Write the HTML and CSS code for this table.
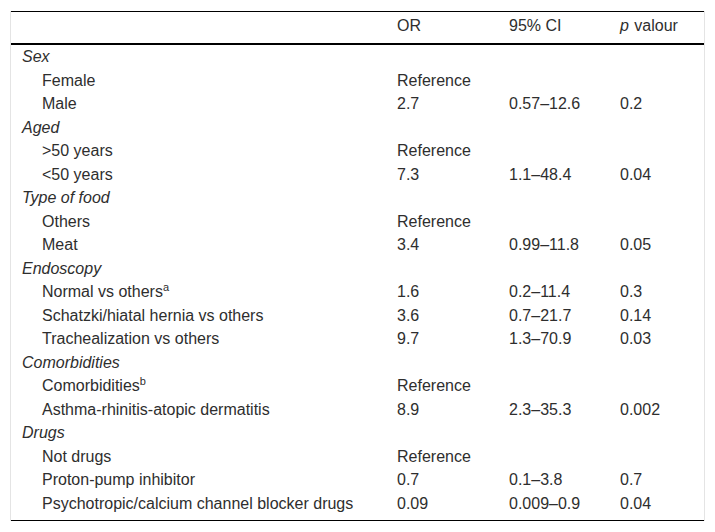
FILE: index.html
```html
<!DOCTYPE html>
<html>
<head>
<meta charset="utf-8">
<link rel="stylesheet" href="styles.css">
</head>
<body>
<div class="frame">
<table class="tbl">
<colgroup><col class="c1"><col class="c2"><col class="c3"><col class="c4"></colgroup>
<thead>
<tr><th></th><th>OR</th><th>95% CI</th><th><i class="pv">p</i> valour</th></tr>
</thead>
<tbody>
<tr><td class="grp" colspan="4">Sex</td></tr>
<tr><td class="sub">Female</td><td>Reference</td><td></td><td></td></tr>
<tr><td class="sub">Male</td><td>2.7</td><td>0.57–12.6</td><td>0.2</td></tr>
<tr><td class="grp" colspan="4">Aged</td></tr>
<tr><td class="sub">&gt;50 years</td><td>Reference</td><td></td><td></td></tr>
<tr><td class="sub">&lt;50 years</td><td>7.3</td><td>1.1–48.4</td><td>0.04</td></tr>
<tr><td class="grp" colspan="4">Type of food</td></tr>
<tr><td class="sub">Others</td><td>Reference</td><td></td><td></td></tr>
<tr><td class="sub">Meat</td><td>3.4</td><td>0.99–11.8</td><td>0.05</td></tr>
<tr><td class="grp" colspan="4">Endoscopy</td></tr>
<tr><td class="sub">Normal vs others<sup>a</sup></td><td>1.6</td><td>0.2–11.4</td><td>0.3</td></tr>
<tr><td class="sub">Schatzki/hiatal hernia vs others</td><td>3.6</td><td>0.7–21.7</td><td>0.14</td></tr>
<tr><td class="sub">Trachealization vs others</td><td>9.7</td><td>1.3–70.9</td><td>0.03</td></tr>
<tr><td class="grp" colspan="4">Comorbidities</td></tr>
<tr><td class="sub">Comorbidities<sup>b</sup></td><td>Reference</td><td></td><td></td></tr>
<tr><td class="sub">Asthma-rhinitis-atopic dermatitis</td><td>8.9</td><td>2.3–35.3</td><td>0.002</td></tr>
<tr><td class="grp" colspan="4">Drugs</td></tr>
<tr><td class="sub">Not drugs</td><td>Reference</td><td></td><td></td></tr>
<tr><td class="sub">Proton-pump inhibitor</td><td>0.7</td><td>0.1–3.8</td><td>0.7</td></tr>
<tr class="last"><td class="sub">Psychotropic/calcium channel blocker drugs</td><td>0.09</td><td>0.009–0.9</td><td>0.04</td></tr>
</tbody>
</table>
</div>
</body>
</html>
```
FILE: styles.css
```css
html, body {
  margin: 0;
  padding: 0;
  background: #ffffff;
}
body {
  font-family: "Liberation Sans", Arial, sans-serif;
  font-size: 16px;
  color: #2e2e2e;
}
.frame {
  margin: 11px 0 0 10px;
  width: 693px;
  border-left: 1px solid #e4e4e4;
  border-right: 1px solid #e4e4e4;
}
.tbl {
  width: 693px;
  border-collapse: collapse;
  table-layout: fixed;
}
.c1 { width: 375px; }
.c2 { width: 112px; }
.c3 { width: 111px; }
.c4 { width: 95px; }
.tbl thead th {
  font-weight: normal;
  text-align: left;
  line-height: 18px;
  padding: 5px 11px 8px 11px;
  border-top: 1px solid #000;
  border-bottom: 2px solid #000;
  white-space: nowrap;
}
.pv {
  margin-right: 1px;
}
.tbl td {
  line-height: 18px;
  padding: 3.4px 11px 2.1px 11px;
  vertical-align: top;
  white-space: nowrap;
}
.tbl td.grp {
  font-style: italic;
}
.tbl td.sub {
  padding-left: 31px;
}
.tbl tr.last td {
  padding-bottom: 7px;
  border-bottom: 1px solid #000;
}
sup {
  font-size: 11px;
  line-height: 0;
  vertical-align: 6px;
}
```
